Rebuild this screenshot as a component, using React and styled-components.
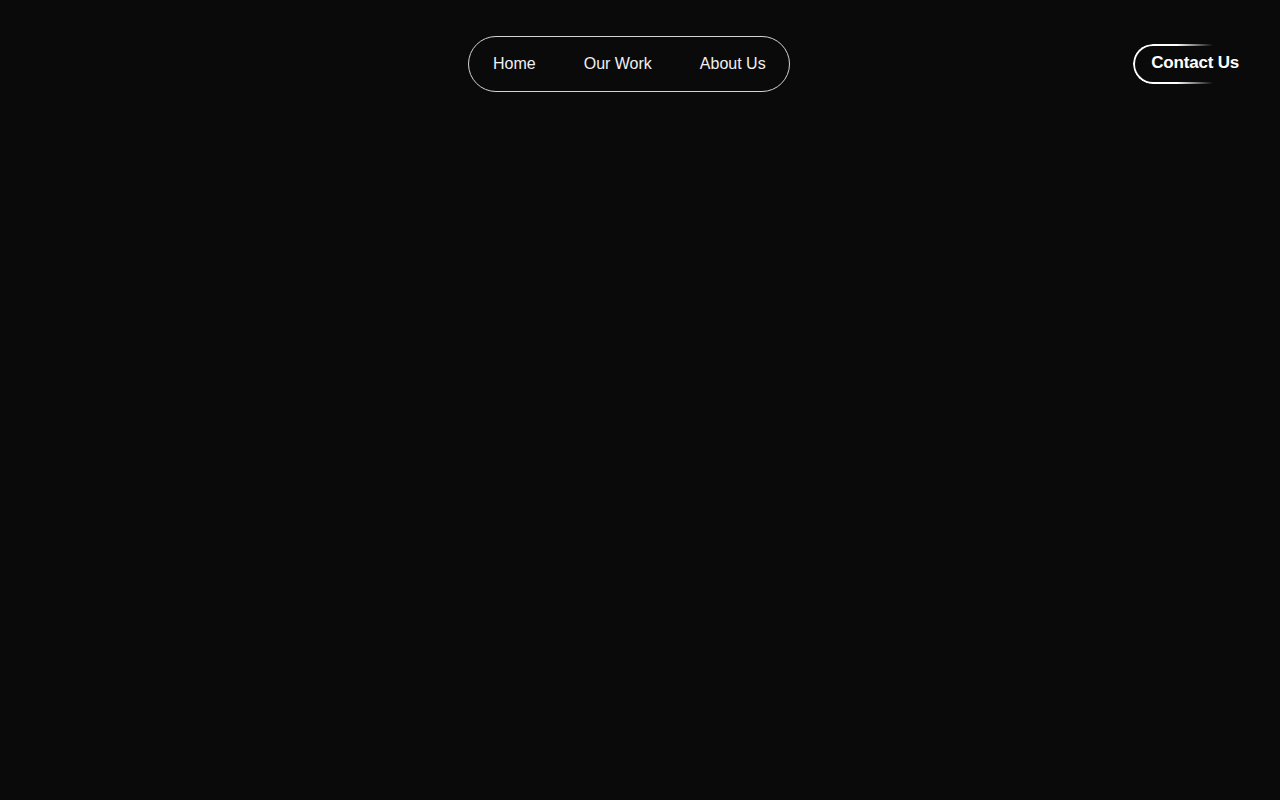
import React from "react";
import styled, { createGlobalStyle } from "styled-components";

const GlobalStyle = createGlobalStyle`
  html, body {
    margin: 0;
    padding: 0;
    background: #0a0a0a;
  }
  body {
    font-family: "Liberation Sans", Arial, sans-serif;
    color: #fff;
  }
`;

const App = () => {
  return (
    <>
      <GlobalStyle />
      <Page>
        <Header>
          <Brand />
          <Nav>
            <NavLink href="#">Home</NavLink>
            <NavLink href="#">Our Work</NavLink>
            <NavLink href="#">About Us</NavLink>
          </Nav>
          <Actions>
            <ContactButton>Contact Us</ContactButton>
          </Actions>
        </Header>
      </Page>
    </>
  );
};

export default App;

const Page = styled.div`
  min-height: 100vh;
  width: 100%;
  background: #0a0a0a;
`;

const Header = styled.header`
  display: grid;
  grid-template-columns: 428px auto 1fr;
  align-items: center;
  padding: 36px 40px 0;
`;

const Brand = styled.div``;

const Nav = styled.nav`
  display: flex;
  align-items: center;
  gap: 48px;
  height: 54px;
  padding: 0 23px 0 24px;
  border: 1px solid #d4d4d4;
  border-radius: 28px;
`;

const NavLink = styled.a`
  font-size: 16px;
  color: #f0f0f0;
  text-decoration: none;
  line-height: 1;
  white-space: nowrap;
`;

const Actions = styled.div`
  display: flex;
  justify-content: flex-end;
`;

const ContactButton = styled.button`
  position: relative;
  height: 40px;
  padding: 0 1px 3px 18px;
  display: flex;
  align-items: center;
  justify-content: flex-start;
  background: transparent;
  border: none;
  color: #fff;
  font-family: "Liberation Sans", Arial, sans-serif;
  font-weight: 700;
  font-size: 17px;
  letter-spacing: -0.2px;
  white-space: nowrap;
  cursor: pointer;

  &::before {
    content: "";
    position: absolute;
    left: 0;
    top: 0;
    width: 80px;
    height: 100%;
    box-sizing: border-box;
    border: 2px solid #fff;
    border-right: none;
    border-radius: 20px 0 0 20px;
    -webkit-mask-image: linear-gradient(to right, #000 0%, #000 55%, transparent 100%);
    mask-image: linear-gradient(to right, #000 0%, #000 55%, transparent 100%);
    pointer-events: none;
  }
`;
